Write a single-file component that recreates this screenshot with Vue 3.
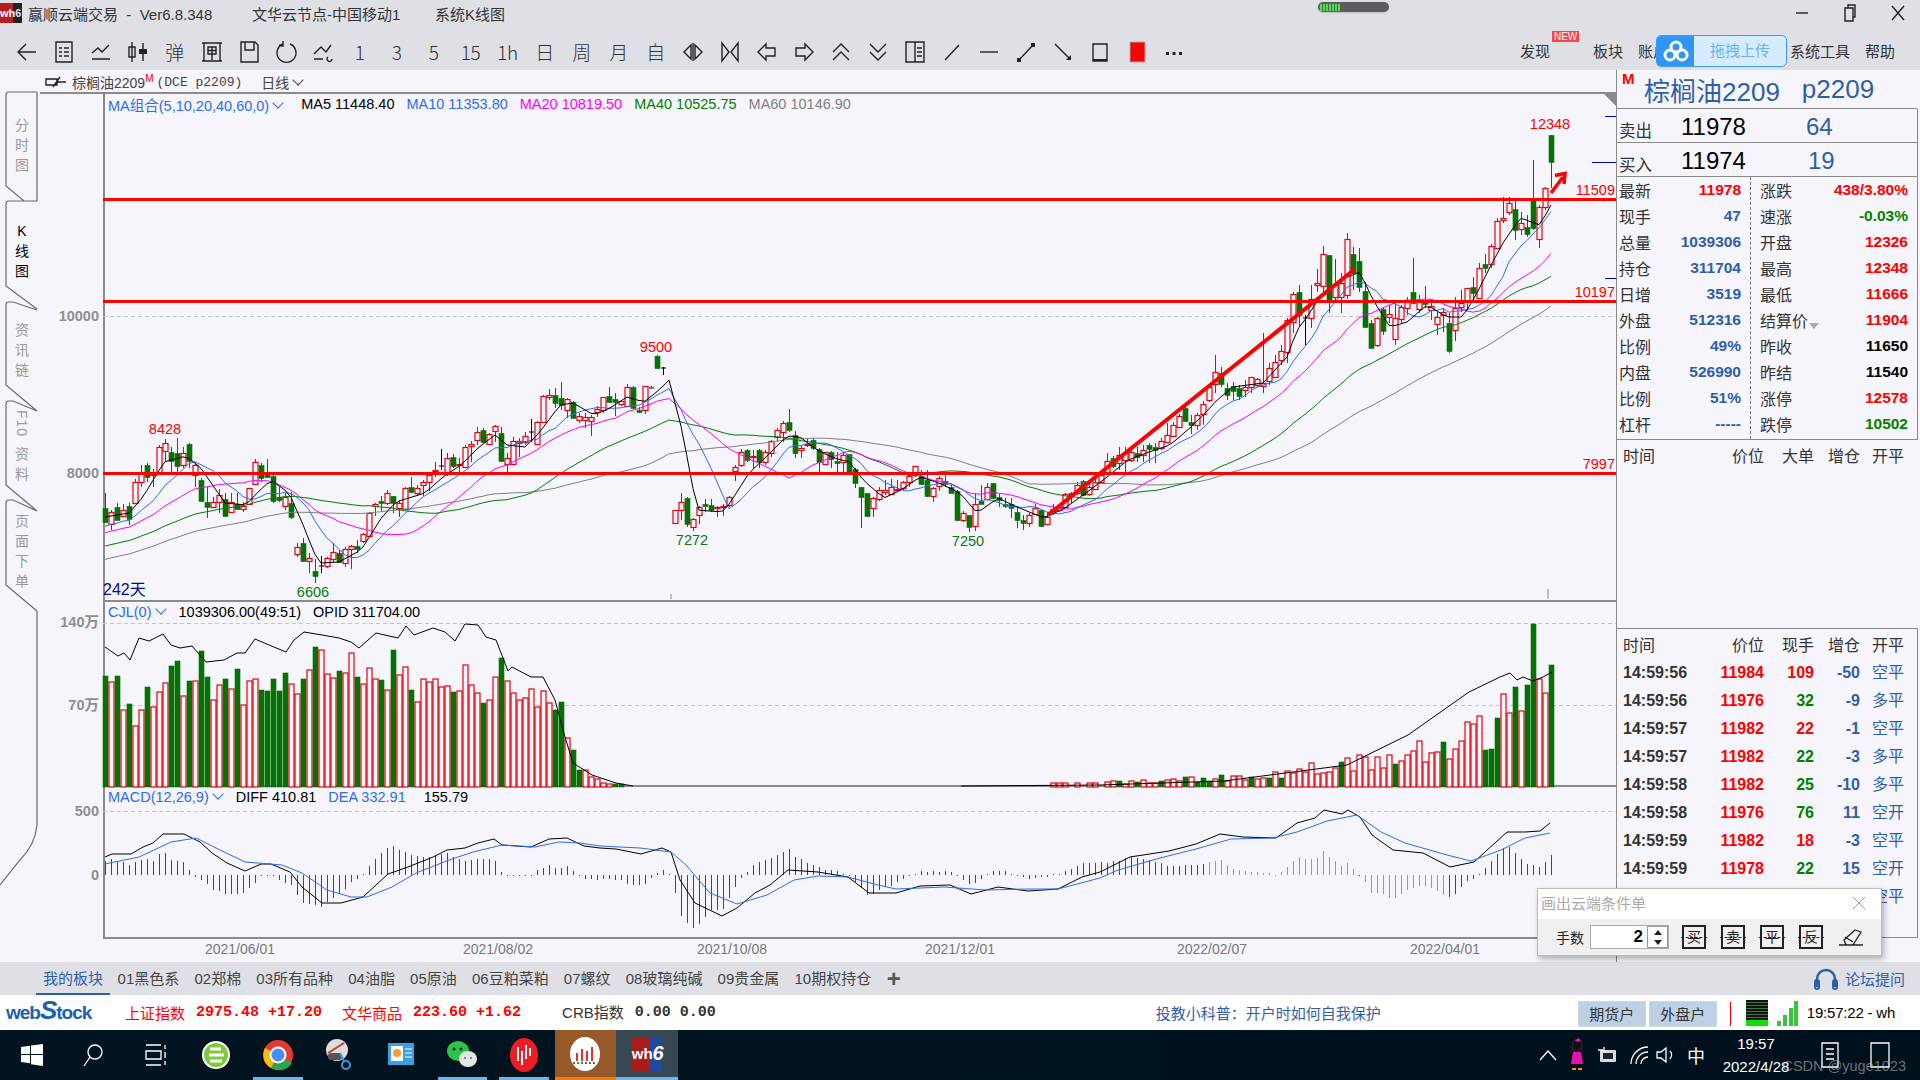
<template>
  <div class="app">
    <!-- title bar -->
    <header class="titlebar">
      <div class="app-logo"><span class="wh">wh</span><span class="six">6</span></div>
      <span class="t-name">赢顺云端交易&nbsp; - &nbsp;Ver6.8.348</span>
      <span class="t-node">文华云节点-中国移动1</span>
      <span class="t-view">系统K线图</span>
      <div class="net-pill">
        <i v-for="n in 7" :key="n"></i>
      </div>
      <div class="win-btns">
        <svg width="14" height="14" viewBox="0 0 14 14"><path d="M1 7h12" class="ln" /></svg>
        <svg width="14" height="18" viewBox="0 0 14 18"><path d="M2 4h8v13H2zM5 4V1h7v12h-2" class="ln" /></svg>
        <svg width="14" height="16" viewBox="0 0 14 16"><path d="M1 1l12 14M13 1L1 15" class="ln" /></svg>
      </div>
    </header>

    <!-- toolbar -->
    <nav class="toolbar">
      <div v-for="(t, i) in tools" :key="i" class="tool">
        <span v-if="t.text" class="tool-text">{{ t.text }}</span>
        <svg v-else width="24" height="24" viewBox="0 0 24 24">
          <path :d="t.d" class="ln" />
          <path v-if="t.fill" :d="t.fill" class="fl" />
          <path v-if="t.red" :d="t.red" class="fr" />
        </svg>
      </div>
      <div class="tool-right">
        <span class="find">发现<em class="new">NEW</em></span>
        <span class="block">板块</span>
        <span class="acct">账户</span>
        <span class="sys">系统工具</span>
        <span class="help">帮助</span>
      </div>
      <div class="upload">
        <div class="up-ico">
          <svg width="28" height="22" viewBox="0 0 28 22"><circle cx="14" cy="7" r="5" /><circle cx="8" cy="15" r="5" /><circle cx="20" cy="15" r="5" /></svg>
        </div>
        <div class="up-txt">拖拽上传</div>
      </div>
    </nav>

    <!-- workspace -->
    <main class="workspace">
      <section class="left">
        <div class="symbol">
          <svg class="sym-ico" width="22" height="14" viewBox="0 0 22 14"><path d="M1 4h11v6H1zM12 7h9M8 12L15 2" class="ln" /></svg>
          <span>棕榈油2209<sup>M</sup></span>
          <span class="dce">(DCE p2209)</span>
          <span class="period">日线<i class="chev"></i></span>
        </div>
        <div class="body">
          <aside class="tabs">
            <svg class="tab-lines" width="103" height="868" viewBox="0 94 103 868">
              <path :d="tabPath" />
            </svg>
            <div v-for="(t, i) in sideTabs" :key="i" class="tab" :class="['tab-' + i, { on: i === 1 }]">
              <span v-for="g in t" :key="g" :class="{ rot: g === 'F10' }">{{ g }}</span>
            </div>
          </aside>
          <div class="charts">
            <div class="pane pane-price">
              <div class="legend">
                <span class="b first">MA组合(5,10,20,40,60,0)<i class="chev"></i></span>
                <span class="k">MA5 11448.40</span>
                <span class="b">MA10 11353.80</span>
                <span class="m">MA20 10819.50</span>
                <span class="g">MA40 10525.75</span>
                <span class="y">MA60 10146.90</span>
              </div>
            </div>
            <div class="pane pane-vol">
              <div class="legend">
                <span class="b">CJL(0)<i class="chev"></i></span>
                <span class="k">1039306.00(49:51)</span>
                <span class="k">OPID 311704.00</span>
              </div>
            </div>
            <div class="pane pane-macd">
              <div class="legend">
                <span class="b">MACD(12,26,9)<i class="chev"></i></span>
                <span class="k">DIFF 410.81</span>
                <span class="b">DEA 332.91</span>
                <span class="k kk">155.79</span>
              </div>
            </div>
            <div class="dates">
              <span v-for="d in dates" :key="d">{{ d }}</span>
            </div>

            <svg class="canvas" width="1513" height="868" viewBox="103 94 1513 868">
              <!-- grid -->
              <path d="M103 316.500H1616M103 623.500H1616M103 705.500H1616M103 811.500H1616" class="dash" />
              <path d="M1605 116.500H1616M1592 162.500H1616M1605 278.500H1616" class="tick" />
              <path d="M671 594v5M1548 589v10" class="tickg" />
              <polygon points="1604,94 1616,94 1616,106" class="corner" />

              <text v-for="l in axis" :key="l.t" :x="99" :y="l.y + 5" class="ax">{{ l.t }}</text>

              <!-- candles -->
              <g v-for="c in candles" :key="c.x" :class="c.cls">
                <path :d="`M${c.x + 0.5} ${c.h}V${c.l}`" class="wick" />
                <rect :x="c.x - 2" :y="c.top + 0.5" width="5" :height="c.bh" class="bodyr" />
              </g>

              <polyline :points="ma60" class="l ma60" />
              <polyline :points="ma40" class="l ma40" />
              <polyline :points="ma20" class="l ma20" />
              <polyline :points="ma10" class="l ma10" />
              <polyline :points="ma5" class="l ma5" />

              <path d="M103 199.500H1616M103 301.500H1616M103 473.500H1616" class="hline" />
              <path d="M1048 515L1355 269" class="hline diag" />
              <path d="M1551 193L1563 177M1555 175.500L1565 173.500L1564 184" class="arrow" />

              <text x="1550" y="129" class="lab r mid">12348</text>
              <text x="1615" y="195" class="lab r end">11509</text>
              <text x="1615" y="297" class="lab r end">10197</text>
              <text x="1615" y="469" class="lab r end">7997</text>
              <text x="165" y="434" class="lab r mid">8428</text>
              <text x="656" y="352" class="lab r mid">9500</text>
              <text x="692" y="545" class="lab gn mid">7272</text>
              <text x="968" y="546" class="lab gn mid">7250</text>
              <text x="313" y="597" class="lab gn mid">6606</text>
              <text x="103" y="595" class="days">242天</text>

              <!-- volume -->
              <g v-for="v in vols" :key="'v' + v.x" :class="v.up ? 'up' : 'dn'">
                <rect :x="v.x - 2" :y="v.y" width="5" :height="787 - v.y" class="bodyr" />
              </g>
              <polyline :points="opidA" class="l ma5" />
              <polyline :points="opidB" class="l ma5" />

              <!-- macd -->
              <path :d="histRed" class="hist red" />
              <path :d="histGreen" class="hist green" />
              <path :d="histGray" class="hist gray" />
              <polyline :points="diffLine" class="l ma5" />
              <polyline :points="deaLine" class="l ma10" />
            </svg>
          </div>
        </div>
      </section>

      <!-- right quote panel -->
      <aside class="panel">
        <div class="p-title"><b class="mk">M</b><span class="p-name">棕榈油2209</span><span class="p-code">p2209</span></div>
        <div class="p-book"><span class="lb">卖出</span><span class="px">11978</span><span class="qt">64</span></div>
        <div class="p-book"><span class="lb">买入</span><span class="px">11974</span><span class="qt q2">19</span></div>
        <div class="p-grid">
          <div class="q-col q-left">
            <div v-for="r in quoteL" :key="r[0] + r[1]" class="q-row"><span>{{ r[0] }}</span><b :class="r[2]">{{ r[1] }}</b></div>
          </div>
          <div class="q-col q-right">
            <div v-for="r in quoteR" :key="r[0]" class="q-row"><span>{{ r[0] }}<i v-if="r[0] === '结算价'" class="tri"></i></span><b :class="r[2]">{{ r[1] }}</b></div>
          </div>
        </div>
        <div class="t-head big-head"><span>时间</span><span>价位</span><span>大单</span><span>增仓</span><span>开平</span></div>
        <div class="ticks">
          <div class="t-head"><span>时间</span><span>价位</span><span>现手</span><span>增仓</span><span>开平</span></div>
          <div v-for="(t, i) in trades" :key="i" class="t-row">
            <b class="tm">{{ t[0] }}</b><b class="r">{{ t[1] }}</b><b :class="t[2] === 'r' ? 'r' : 'gn'">{{ t[3] }}</b><b class="bl">{{ t[4] }}</b><span class="bl">{{ t[5] }}</span>
          </div>
        </div>
      </aside>
    </main>

    <!-- bottom tabs -->
    <div class="sectors">
      <span v-for="(s, i) in sectors" :key="s" class="sec" :class="{ on: i === 0 }">{{ s }}</span>
      <span class="plus">+</span>
      <span class="forum">
        <svg width="26" height="24" viewBox="0 0 26 24"><path d="M4 20V12a9 9 0 0 1 18 0v8" class="hs" /><rect x="2" y="13" width="4" height="9" rx="2" class="hsf" /><rect x="20" y="13" width="4" height="9" rx="2" class="hsf" /></svg>
        论坛提问
      </span>
    </div>

    <!-- status bar -->
    <div class="status">
      <span class="web">web<em>S</em>tock</span>
      <span class="r idx idx1">上证指数</span><b class="r num n1">2975.48 +17.20</b>
      <span class="r idx idx2">文华商品</span><b class="r num n1">223.60 +1.62</b>
      <span class="crb">CRB指数</span><b class="num n2">0.00 0.00</b>
      <span class="edu">投教小科普：开户时如何自我保护</span>
      <span class="acc acc1">期货户</span><span class="acc">外盘户</span>
      <i class="red-tick"></i>
      <span class="meter"></span>
      <svg class="signal" width="22" height="28" viewBox="0 0 22 28"><path d="M1 22h4v5H1zM7 16h4v11H7zM13 9h4v18h-4zM18 2h4v25h-4z" /></svg>
      <span class="clock">19:57:22 - wh</span>
    </div>

    <!-- windows taskbar -->
    <footer class="taskbar">
      <div class="tb-left">
        <div class="tb"><svg width="22" height="22" viewBox="0 0 22 22"><path d="M0 3l9-1.300V10H0zM10 1.500L22 0v10H10zM0 11h9v8.300L0 18zM10 11h12v11l-12-1.700z" fill="#fff" /></svg></div>
        <div class="tb"><svg width="22" height="24" viewBox="0 0 22 24"><circle cx="13" cy="9" r="7" class="tb-ln" /><path d="M8 14L2 23" class="tb-ln" /></svg></div>
        <div class="tb"><svg width="24" height="24" viewBox="0 0 24 24"><path d="M3 2h15M3 22h15M3 8h15v8H3zM22 2v4M22 9v6M22 18v4" class="tb-ln" /></svg></div>
        <div class="tb"><svg width="32" height="34" viewBox="0 0 32 34"><circle cx="16" cy="17" r="13" fill="#7ecb3a" stroke="#fff" stroke-width="2" /><path d="M9 17h15M10 11h11M10 23h12" stroke="#fff" stroke-width="3" /></svg></div>
        <div class="tb run"><svg width="32" height="32" viewBox="0 0 32 32"><circle cx="16" cy="16" r="15" fill="#e33b2e" /><path d="M16 16L30 24A15 15 0 0 1 9 29z" fill="#2ea44f" /><path d="M16 16L9 29A15 15 0 0 1 3 9z" fill="#fbbc05" /><circle cx="16" cy="16" r="7.500" fill="#4a8af4" stroke="#fff" stroke-width="2" /></svg></div>
        <div class="tb"><svg width="34" height="36" viewBox="0 0 34 36"><circle cx="15" cy="13" r="11" fill="#ddd" /><path d="M6 16L22 6" stroke="#c33" stroke-width="2" /><rect x="6" y="16" width="14" height="7" rx="3" fill="#555" /><circle cx="24" cy="28" r="4" fill="none" stroke="#3a9ad9" stroke-width="2" /><path d="M22 24L18 16" stroke="#3a9ad9" stroke-width="2" /></svg></div>
        <div class="tb"><svg width="30" height="30" viewBox="0 0 30 30"><rect x="2" y="3" width="26" height="22" fill="#3aa0e0" /><rect x="5" y="6" width="12" height="15" fill="#fff" /><circle cx="11" cy="13" r="4" fill="#f0a030" /><path d="M19 9h7M19 13h7M19 17h7" stroke="#fff" /></svg></div>
        <div class="tb run"><svg width="34" height="32" viewBox="0 0 34 32"><ellipse cx="13" cy="12" rx="11" ry="10" fill="#2fc24a" /><ellipse cx="23" cy="20" rx="9" ry="8" fill="#e6e6e6" /><circle cx="9" cy="10" r="1.500" fill="#123" /><circle cx="16" cy="10" r="1.500" fill="#123" /><circle cx="20" cy="19" r="1" fill="#666" /><circle cx="26" cy="19" r="1" fill="#666" /></svg></div>
        <div class="tb run"><svg width="32" height="36" viewBox="0 0 32 36"><ellipse cx="16" cy="18" rx="14" ry="17" fill="#ee1c25" /><path d="M10 10v14M14 14v14M18 8v14M22 11v8" stroke="#fff" stroke-width="2" /></svg></div>
        <div class="tb tile-or"><svg width="32" height="36" viewBox="0 0 32 36"><ellipse cx="16" cy="18" rx="15" ry="17" fill="#fff" /><path d="M8 17v8M13 13v12M18 15v10M23 11v14" stroke="#d33" stroke-width="2" /><path d="M4 27h24" stroke="#2a8a3a" stroke-dasharray="2 2" stroke-width="2" /></svg></div>
        <div class="tb tile-bl"><div class="wh6"><span>wh</span><span class="six">6</span></div></div>
      </div>
      <div class="tray">
        <svg width="18" height="12" viewBox="0 0 18 12"><path d="M1 11L9 2l8 9" class="tb-ln" /></svg>
        <svg width="16" height="34" viewBox="0 0 16 34"><ellipse cx="8" cy="8" rx="5" ry="6" fill="#111" stroke="#555" stroke-width=".5"/><path d="M4 14h8l2 12H2z" fill="#e912a6" /><path d="M3 31h4M9 31h4" stroke="#f90" stroke-width="2" /><path d="M6 2l4-2 2 3-4 1z" fill="#e912a6" /></svg>
        <svg width="20" height="20" viewBox="0 0 20 20"><rect x="3" y="5" width="16" height="12" rx="1" fill="#ddd" /><path d="M7 2v5M1 5h5" class="tb-ln" /><path d="M6 8h10v6H6z" fill="#223" /></svg>
        <svg width="20" height="20" viewBox="0 0 20 20"><path d="M2 19A17 17 0 0 1 19 2M7 19A12 12 0 0 1 19 7M12 19A7 7 0 0 1 19 12" class="tb-ln" /></svg>
        <svg class="vol-ico" width="22" height="22" viewBox="0 0 22 22"><path d="M2 8h4l5-4v14l-5-4H2zM15 7a6 6 0 0 1 0 8" class="tb-ln" /></svg>
        <span class="ime">中</span>
        <div class="tb-time"><span>19:57</span><span>2022/4/28</span></div>
        <svg class="note" width="22" height="28" viewBox="0 0 22 28"><path d="M3 2h16v24H3zM7 8h8M7 13h8M7 18h8" class="tb-ln" /></svg>
        <svg class="desk" width="22" height="26" viewBox="0 0 22 26"><path d="M2 1h18v24H2z" class="tb-ln" /></svg>
      </div>
      <span class="mark">CSDN @yuge1023</span>
    </footer>

    <!-- floating order window -->
    <div class="popup">
      <div class="pop-title">
        <span>画出云端条件单</span>
        <svg width="14" height="14" viewBox="0 0 14 14"><path d="M1 1l12 12M13 1L1 13" /></svg>
      </div>
      <div class="pop-body">
        <span class="lots">手数</span>
        <div class="lot-box">
          <b>2</b>
          <div class="spin"><i class="sp-up"></i><i class="sp-dn"></i></div>
        </div>
        <div v-for="b in ['买', '卖', '平', '反']" :key="b" class="op"><span>{{ b }}</span></div>
        <svg class="eraser" width="26" height="22" viewBox="0 0 26 22"><path d="M1 19h24M8 19l-2-5L17 4l6 2-8 13M7 11l8 5" /></svg>
      </div>
    </div>
  </div>
</template>

<script setup>
const tools = [
  { d: 'M21 12H4M11 4l-8 8 8 8' },
  { d: 'M4 2h16v20H4zM7 8h3M12 8h5M7 12h3M12 12h5M7 16h3M12 16h5' },
  { d: 'M3 13l6-5 4 4 7-7M3 19h18' },
  { d: 'M6 2v20M3 7h6v10H3zM17 3v18', fill: 'M13 9h8v5h-8z' },
  { text: '弹' },
  { d: 'M4 3h16v18H4zM2 3h20M2 21h20M8 7h8v7H8zM8 10.500h8M12 7v13' },
  { d: 'M4 2h14l3 3v17H4zM8 2v8h9V2M8 22' },
  { d: 'M9 4a9.500 9.500 0 1 0 7 0M9 1v5l-4-1' },
  { d: 'M3 19h9M3 14l7-7 5 5 5-7M17 17a2.500 2.500 0 1 0 4 2' },
  { text: '1' }, { text: '3' }, { text: '5' }, { text: '15' }, { text: '1h' },
  { text: '日' }, { text: '周' }, { text: '月' }, { text: '自' },
  { d: 'M3 12l7-7v14zM21 12l-7-7v14zM12 3v18' },
  { d: 'M4 3v18l7-9zM20 3v18l-7-9z' },
  { d: 'M3 12l8-8v4h9v8h-9v4z' },
  { d: 'M21 12l-8-8v4H4v8h9v4z' },
  { d: 'M4 12l8-8 8 8M4 20l8-8 8 8' },
  { d: 'M4 4l8 8 8-8M4 12l8 8 8-8' },
  { d: 'M3 2h18v20H3zM12 2v20M14 8h5M14 12h5M14 16h5' },
  { d: 'M5 20L19 5' },
  { d: 'M3 12h18' },
  { d: 'M5 20L19 5', fill: 'M3 18h4v4H3zM17 3h4v4h-4z' },
  { d: 'M4 4l15 15', fill: 'M15 20h5v-5z' },
  { d: 'M5 4h14v17H5z', fill: 'M5 19h14v2H5z' },
  { d: '', red: 'M5 2h15v20H5z' },
  { d: '', fill: 'M4 12h3v3H4zM10.500 12h3v3h-3zM17 12h3v3h-3z' },
]

const sideTabs = [['分', '时', '图'], ['K', '线', '图'], ['资', '讯', '链'], ['F10', '资', '料'], ['页', '面', '下', '单']]
const tabPath =
  'M37 92H9Q6 92 6 95V186L24 201H37V92' +
  'M24 201H9Q6 201 6 204V286L37 309' +
  'M37 310L13 302H9Q6 302 6 305V385L37 411' +
  'M37 411L13 401H9Q6 401 6 404V485L37 511' +
  'M37 511L13 500H9Q6 500 6 503V585L37 611' +
  'M37 611V825Q35 845 20 860L0 885'

const dates = ['2021/06/01', '2021/08/02', '2021/10/08', '2021/12/01', '2022/02/07', '2022/04/01']
const axis = [
  { t: '10000', y: 316 }, { t: '8000', y: 473 }, { t: '140万', y: 622 },
  { t: '70万', y: 705 }, { t: '500', y: 811 }, { t: '0', y: 875 },
]

// --- chart data, all in screen pixels ---
let seed = 20220428
const rnd = () => {
  seed = (seed * 1664525 + 1013904223) % 4294967296
  return seed / 4294967296
}
const interp = (pts, x) => {
  if (x <= pts[0][0]) return pts[0][1]
  for (let i = 1; i < pts.length; i++) {
    if (x <= pts[i][0]) {
      const [x0, y0] = pts[i - 1]
      const [x1, y1] = pts[i]
      return y0 + ((y1 - y0) * (x - x0)) / (x1 - x0)
    }
  }
  return pts[pts.length - 1][1]
}
const N = 242
const xOf = (i) => 105 + 6 * i
const toPts = (arr) => arr.map((y, i) => `${xOf(i)},${y.toFixed(1)}`).join(' ')

// candles read off the chart: colour top bottom high low
const barsA = 'g535,578,490,580 r545,582,540,600 g532,570,518,570 r540,558,523,560 g528,568,520,585 r455,518,448,520 r425,455,405,470 g405,440,400,455 r430,436,418,470 r350,430,345,435 r340,365,328,392 g365,393,350,425 g370,410,325,425 r368,405,350,415 g343,395,340,415 r405,435,395,470 g450,513,445,515 g516,530,470,565 r516,532,500,533 r496,518,478,550 g508,558,490,560 r517,548,488,550 g523,537,488,540 r527,536,517,545 r475,522,475,525 r397,463,388,465 g405,443,400,455 g425,440,388,445 g438,513,435,518 g502,510,470,515 r502,528,490,540 g520,563,485,568 r652,674,640,680 g640,693,625,697 r683,692,668,728 g723,737,688,758 k705,706,678,728 r683,708,680,715 r667,687,640,695 g670,698,660,700 r658,700,650,710 r647,655,645,717 g647,655,630,670 r612,634,610,640 r550,618,545,620 r521,528,518,558 g514,520,498,542 r490,520,480,525 g498,520,498,550 r520,535,510,560 r473,535,470,537 g472,486,442,490 r475,490,465,497 r455,465,450,497 r435,455,425,482 r420,423,395,440 k405,406,358,420 r383,425,370,438 g382,410,372,415 r403,405,385,430 r352,412,345,415 r343,350,333,395 r305,328,290,345 g300,335,295,340 r313,342,310,345 r288,302,285,335 g310,395,292,397 r385,402,368,425 r333,403,322,405 r333,340,325,380 r317,335,305,345 k303,304,268,335 r275,340,273,345 r197,275,195,280 r195,200,178,210 g195,218,175,235'
const barsB = 'g205,225,155,240 r208,242,205,265 g215,262,212,265 r259,272,250,280 r262,272,250,295 r262,275,255,318 r237,245,228,260 r202,240,200,250 g197,214,170,218 g207,215,190,258 r212,220,210,228 r172,228,162,232 g170,234,168,238 g240,246,230,250 r168,240,168,252 k170,171,168,172 g78,115,76,116 k112,113,112,135 - r541,580,540,583 r517,542,490,570 g504,582,502,592 r568,592,565,602 r530,555,527,582 g522,527,506,545 g525,540,506,545 r530,533,528,560 r529,533,523,558 r500,525,498,530 r412,425,405,452 r367,407,358,410 g360,390,357,395 r377,381,360,415 g360,397,358,415 r365,395,360,405 r332,368,330,380 r300,320,295,335 r280,308,272,335 g275,300,237,305 g315,368,303,385 r355,362,345,385 r341,345,325,350 g330,355,325,360 g358,398,355,425 r365,400,365,403 g365,385,362,415 g393,400,365,425 r375,395,370,425 g372,425,372,428 g418,460,415,475 g470,500,470,595 g490,558,488,562 r505,535,500,560 r480,508,470,512 r480,485,450,495 r472,492,448,495 r478,480,450,485 r456,475,452,480 r437,455,425,470 r408,435,408,440 g438,462,420,465 g450,497,420,500 r475,500,470,515 r445,468,438,482 g452,460,425,470 g470,487,465,490 g483,570,480,573 r548,570,542,575 g555,590,555,605 r523,590,490,603 g512,520,465,520 r470,507,460,510 g460,505,458,507 g500,510,492,530 g523,528,505,535 g522,535,505,565 g545,570,530,595 g570,580,555,600 r555,580,550,590 r533,550,522,555 g540,588,540,590 r560,580,545,585 r538,545,522,555 r530,540,525,545 r492,530,488,535 g488,497,485,520 r465,490,455,495 g453,495,450,497 r470,490,460,497 r455,475,448,480 r435,455,420,460 r393,425,370,430 g385,408,378,415 r375,400,350,420 r370,392,350,430 r365,390,355,395 g368,380,350,395 r360,375,345,395 g346,358,340,398 g350,360,340,400 r333,355,325,360 r316,338,280,340 r285,318,275,320 r258,290,253,295 g235,275,232,275 g275,285,255,312 r255,285,250,300 r222,252,212,285 r172,212,165,215'
const barsC = 'r815,850,765,880 g818,850,800,860 g865,885,850,900 g857,872,845,900 g865,890,855,900 r860,870,840,890 r832,862,830,880 r838,857,835,860 r850,860,700,880 r805,845,790,855 r785,830,765,832 r752,778,735,795 r660,757,655,790 r583,668,575,700 g577,645,555,680 k650,651,645,735 r597,655,555,685 r550,555,507,575 r463,560,438,575 g465,600,465,640 r555,590,478,600 r548,590,520,640 r418,587,400,597 g462,520,440,570 g483,560,445,575 g573,682,545,685 g670,745,660,745 r655,735,650,740 g628,695,620,705 r643,652,615,670 r655,718,610,735 r622,657,615,670 r607,625,590,645 g576,610,475,612 r600,628,585,640 g600,613,558,625 r617,628,600,660 r650,672,635,705 r636,645,625,695 g670,755,640,760 r625,690,590,722 r610,622,570,635 r565,605,565,630 g562,580,530,600 r503,592,490,595 g492,505,462,520 r437,490,432,505 r362,442,355,445 r355,360,292,370 r310,338,292,345 g328,390,300,420 r370,388,335,405 g381,401,345,412 g300,385,180,390 r322,418,315,443 r265,322,262,330 g105,187,105,265'

const parseBars = (s, off, div) => s.split(' ').map((b) => {
  if (b === '-') return null
  const [t, e, h, l] = b.slice(1).split(',').map((n) => off + Number(n) / div)
  return { kind: b[0], t, e, h, l }
})
const bars = [...parseBars(barsA, 330, 3), ...parseBars(barsB, 330, 3), ...parseBars(barsC, 100, 3)]

const closes = []
bars.forEach((b, i) => {
  if (!b) closes.push(closes[i - 1])
  else closes.push(b.kind === 'r' ? b.t : b.e)
})

const candles = []
bars.forEach((b, i) => {
  if (!b) return
  const cls = b.kind === 'r' ? 'up' : b.kind === 'g' ? 'dn' : 'doji'
  candles.push({
    x: xOf(i),
    cls,
    top: Math.round(b.t),
    bh: Math.max(1, Math.round(b.e - b.t)),
    h: Math.round(b.h),
    l: Math.round(b.l),
  })
})

const ma5Pts = [[105,517],[129,513],[143,497],[164,462],[186,456],[200,467],[214,487],[225,503],[246,505],[257,493],[271,480],[289,493],[304,527],[314,553],[321,563],[339,562],[361,550],[382,517],[396,502],[425,493],[443,477],[461,465],[479,447],[495,435],[507,445],[525,447],[539,433],[560,405],[573,403],[594,415],[610,408],[627,397],[644,402],[659,390],[669,380],[682,430],[697,510],[722,512],[730,503],[749,473],[766,457],[787,436],[800,437],[817,450],[834,458],[850,462],[863,480],[884,498],[901,490],[920,477],[939,483],[960,493],[977,513],[998,498],[1017,507],[1044,518],[1065,508],[1090,490],[1107,477],[1128,460],[1149,452],[1170,445],[1191,427],[1208,410],[1217,400],[1233,387],[1263,383],[1287,357],[1297,330],[1307,317],[1320,297],[1340,280],[1360,272],[1373,300],[1390,327],[1407,322],[1427,305],[1447,317],[1463,317],[1477,293],[1490,267],[1503,243],[1520,218],[1540,225],[1551,205]]
const ma5Arr = Array.from({ length: N }, (_, i) => interp(ma5Pts, xOf(i)))

const history = Array.from({ length: 60 }, (_, i) => 600 - (i / 60) * 80)
const maOf = (n) => closes.map((_, i) => {
  let s = 0
  for (let k = i - n + 1; k <= i; k++) s += k < 0 ? history[60 + k] : closes[k]
  return s / n
})
const ma5 = toPts(ma5Arr)
const ma10 = toPts(maOf(10))
const ma20 = toPts(maOf(20))
const ma40 = toPts(maOf(40))
const ma60 = toPts(maOf(60))

// first stretch of volume: colour + top (y offset x3 from 600)
const volHead = 'g228 r246 g228 r330 g312 r378 r330 g261 r321 r276 r250 g198 g183 r288 g243 r243 g153 g231 r300 r255 g237 r267 g207 r315 r243 r237 g270 g273 g237 g273 g219 r252 r282 g237 r210 g141 r150 r222 r234 g213 r219 r159 g231 r252 r204 r237 g240 r270 g150 r225 r201 g270 r306 r237 r246 r237 r261 r258 g276 r273 r195 r255 r279 g309 r300 r231 g174 r243 r279 r300 r294 r267 r321 r273 r309 g330 g306 r414 g450 g510 r510 r532 r538 r549 r552 g552 g552'.split(' ')
const volTail = { 233: ['r', 694], 234: ['r', 713], 235: ['g', 687], 236: ['r', 711], 237: ['g', 685], 238: ['g', 624], 239: ['r', 679], 240: ['r', 693], 241: ['g', 665] }
const vols = []
volHead.forEach((s, i) => {
  vols.push({ x: xOf(i), up: s[0] === 'r', y: Math.round(600 + Number(s.slice(1)) / 3) })
})
for (let i = 143; i < N; i++) {
  if (volTail[i]) {
    vols.push({ x: xOf(i), up: volTail[i][0] === 'r', y: volTail[i][1] })
  } else {
    const h = 1.5 * Math.exp((i - 143) * 0.042) * (0.6 + rnd() * 0.8)
    const up = rnd() < 0.78
    if (h >= 3) vols.push({ x: xOf(i), up, y: Math.round(787 - h) })
  }
}

const joinPts = (p) => p.map((q) => q.join(',')).join(' ')
const opidA = joinPts([[105,647],[118,656],[124,653],[130,660],[139,638],[149,641],[163,634],[171,645],[180,648],[192,646],[206,662],[224,660],[237,653],[245,653],[255,639],[269,645],[286,652],[294,640],[304,632],[322,635],[339,638],[351,642],[359,648],[376,633],[398,638],[406,626],[414,635],[433,628],[445,632],[455,641],[465,624],[478,625],[486,637],[496,640],[508,671],[512,667],[531,677],[543,677],[555,700],[565,737],[573,763],[592,775],[616,783],[633,786]])
const opidB = joinPts([[961,786],[1100,785],[1224,781],[1347,765],[1408,735],[1469,692],[1500,677],[1510,673],[1517,680],[1523,677],[1533,681],[1543,677],[1552,672]])

const diffPts = [[105,857],[112,854],[131,854],[143,847],[153,843],[163,834],[184,834],[200,842],[212,853],[227,863],[245,871],[261,864],[271,864],[290,872],[302,887],[322,903],[341,903],[363,897],[388,874],[408,867],[433,857],[447,850],[465,848],[478,843],[494,839],[502,845],[531,847],[549,839],[567,838],[584,846],[600,848],[616,849],[641,854],[662,848],[671,852],[680,880],[695,903],[722,916],[737,908],[755,893],[770,885],[788,870],[818,872],[848,877],[869,893],[896,893],[920,886],[950,885],[971,894],[998,887],[1028,891],[1058,889],[1082,877],[1100,872],[1130,857],[1169,851],[1196,844],[1220,834],[1243,837],[1276,838],[1297,823],[1315,818],[1324,810],[1342,814],[1348,810],[1360,817],[1372,835],[1393,850],[1423,853],[1450,867],[1474,862],[1507,832],[1525,832],[1540,831],[1550,823]]
const deaPts = [[105,864],[139,857],[171,842],[196,838],[216,848],[245,862],[282,865],[302,873],[327,890],[351,897],[367,897],[392,887],[416,873],[449,860],[473,852],[502,845],[535,847],[559,842],[580,843],[600,846],[640,848],[671,852],[686,865],[710,893],[737,904],[767,895],[794,880],[818,876],[848,877],[878,885],[896,889],[944,887],[986,890],[1028,889],[1058,889],[1100,878],[1118,870],[1160,858],[1196,849],[1231,839],[1273,838],[1297,832],[1327,821],[1357,815],[1381,832],[1405,843],[1447,855],[1471,861],[1501,850],[1525,838],[1550,833]]
const diffLine = joinPts(diffPts)
const deaLine = joinPts(deaPts)

let histRed = ''
let histGreen = ''
let histGray = ''
for (let i = 0; i < N; i++) {
  const x = xOf(i)
  const v = 2 * (interp(deaPts, x) - interp(diffPts, x)) + (rnd() - 0.5) * 2
  const h = Math.abs(v) < 1 ? (v < 0 ? -1 : 1) : v
  const seg = `M${x + 0.5} 875V${(875 - h).toFixed(0)}`
  if ((x >= 1209 && x <= 1355) || (x >= 1363 && x <= 1447)) histGray += seg
  else if (h > 0) histRed += seg
  else histGreen += seg
}

const quoteL = [
  ['最新', '11978', 'r'], ['现手', '47', 'bl'], ['总量', '1039306', 'bl'], ['持仓', '311704', 'bl'], ['日增', '3519', 'bl'],
  ['外盘', '512316', 'bl'], ['比例', '49%', 'bl'], ['内盘', '526990', 'bl'], ['比例', '51%', 'bl'], ['杠杆', '-----', 'bl'],
]
const quoteR = [
  ['涨跌', '438/3.80%', 'r'], ['速涨', '-0.03%', 'gn'], ['开盘', '12326', 'r'], ['最高', '12348', 'r'], ['最低', '11666', 'r'],
  ['结算价', '11904', 'r'], ['昨收', '11650', 'kk'], ['昨结', '11540', 'kk'], ['涨停', '12578', 'r'], ['跌停', '10502', 'gn'],
]
const trades = [
  ['14:59:56', '11984', 'r', '109', '-50', '空平'],
  ['14:59:56', '11976', 'g', '32', '-9', '多平'],
  ['14:59:57', '11982', 'r', '22', '-1', '空平'],
  ['14:59:57', '11982', 'g', '22', '-3', '多平'],
  ['14:59:58', '11982', 'g', '25', '-10', '多平'],
  ['14:59:58', '11976', 'g', '76', '11', '空开'],
  ['14:59:59', '11982', 'r', '18', '-3', '空平'],
  ['14:59:59', '11978', 'g', '22', '15', '空开'],
  ['', '', 'g', '', '', '空平'],
]
const sectors = ['我的板块', '01黑色系', '02郑棉', '03所有品种', '04油脂', '05原油', '06豆粕菜粕', '07螺纹', '08玻璃纯碱', '09贵金属', '10期权持仓']
</script>

<style>
html, body { margin: 0; padding: 0; background: #f5f5fb; }
</style>

<style scoped>
.app {
  position: relative;
  width: 1920px;
  height: 1080px;
  overflow: hidden;
  display: flex;
  flex-direction: column;
  background: #f5f5fb;
  color: #333;
  font-family: "Liberation Sans", "Noto Sans CJK SC", sans-serif;
  font-size: 15px;
}
svg { display: block; }
.ln { fill: none; stroke: #222; stroke-width: 1.4; }
.fl { fill: #222; stroke: none; }
.fr { fill: #f00; stroke: #aaa; stroke-width: 1; }
.chev {
  display: inline-block;
  width: 7px;
  height: 7px;
  margin: 0 2px 4px 5px;
  border-right: 1.5px solid currentColor;
  border-bottom: 1.5px solid currentColor;
  transform: rotate(45deg);
}

/* title */
.titlebar {
  position: relative;
  height: 35px;
  flex: none;
  box-sizing: border-box;
  padding-bottom: 9px;
  display: flex;
  align-items: center;
  background: #dfe0e5;
}
.app-logo {
  width: 22px;
  height: 20px;
  background: linear-gradient(90deg, #b81c1c 60%, #222 60%);
  color: #fff;
  font-size: 11px;
  font-weight: bold;
  display: flex;
  align-items: center;
  overflow: hidden;
}
.app-logo .six { color: #cfe0ff; }
.t-name { margin-left: 6px; width: 224px; white-space: nowrap; }
.t-node { width: 183px; white-space: nowrap; }
.net-pill {
  position: absolute;
  left: 1318px;
  top: 2px;
  width: 71px;
  height: 10px;
  padding-left: 2px;
  box-sizing: border-box;
  border-radius: 5px;
  background: #5c5c5e;
  display: flex;
  align-items: center;
  gap: 1px;
  box-shadow: 0 1px 2px #bbb;
}
.net-pill i { width: 2px; height: 7px; background: #4ee04e; }
.win-btns {
  margin-left: auto;
  padding-right: 15px;
  display: flex;
  align-items: center;
  gap: 34px;
}

/* toolbar */
.toolbar {
  position: relative;
  height: 35px;
  flex: none;
  display: flex;
  align-items: center;
  padding-left: 8px;
  background: #dfe0e5;
}
.tool {
  width: 37px;
  height: 35px;
  flex: none;
  box-sizing: border-box;
  padding-bottom: 2px;
  display: flex;
  align-items: center;
  justify-content: center;
}
.tool-text { font-size: 19px; color: #333; font-weight: 300; letter-spacing: -0.5px; font-family: "Noto Sans CJK SC", "Liberation Sans", sans-serif; }
.tool-right {
  margin-left: auto;
  display: flex;
  align-items: center;
  padding: 0 25px 5px 0;
  color: #333;
  white-space: nowrap;
}
.find { position: relative; margin-right: 43px; }
.new {
  position: absolute;
  left: 32px;
  top: -9px;
  padding: 0 2px;
  font-size: 10px;
  line-height: 11px;
  font-style: normal;
  color: #fff;
  background: #f44;
}
.block { margin-right: 15px; }
.acct { margin-right: 122px; }
.sys { margin-right: 15px; }
.upload {
  position: absolute;
  left: 1656px;
  top: 0;
  width: 131px;
  height: 32px;
  display: flex;
  border: 1px solid #3b9bf0;
  border-radius: 5px;
  overflow: hidden;
  background: #d5ecff;
  box-sizing: border-box;
}
.up-ico { width: 37px; background: #2f96f5; display: flex; align-items: center; justify-content: center; }
.up-ico circle { fill: none; stroke: #fff; stroke-width: 3; }
.up-txt { flex: 1; text-align: center; line-height: 30px; color: #6cb4f0; }

/* workspace */
.workspace { flex: 1; min-height: 0; display: flex; }
.left { width: 1616px; flex: none; display: flex; flex-direction: column; }
.symbol {
  position: relative;
  height: 24px;
  flex: none;
  box-sizing: border-box;
  padding-left: 45px;
  display: flex;
  align-items: center;
  font-size: 14px;
  color: #444;
}
.symbol::after {
  content: "";
  position: absolute;
  left: 40px;
  right: 0;
  bottom: 0;
  border-bottom: 2px solid #8a8a8a;
}
.sym-ico { margin-right: 5px; }
.symbol sup { color: #e00; font-size: 10px; line-height: 0; }
.dce { font-family: "Liberation Mono", monospace; font-size: 13px; margin-left: 3px; }
.period { margin-left: 19px; }
.body { flex: 1; min-height: 0; display: flex; }

.tabs {
  position: relative;
  width: 103px;
  flex: none;
}
.tab-lines { position: absolute; left: 0; top: 0; overflow: visible; }
.tab-lines path { fill: none; stroke: #6a6a6a; stroke-width: 1.2; }
.tab {
  position: relative;
  width: 44px;
  display: flex;
  flex-direction: column;
  align-items: center;
  font-size: 14px;
  line-height: 20px;
  color: #9a9a9a;
  box-sizing: border-box;
}
.tab.on { color: #000; }
.tab-0 { height: 107px; padding-top: 21px; }
.tab-1 { height: 101px; padding-top: 20px; }
.tab-2 { height: 99px; padding-top: 18px; }
.tab-3 { height: 99px; padding-top: 9px; }
.tab-4 { padding-top: 11px; }
.rot { writing-mode: vertical-rl; height: 28px; line-height: 14px; letter-spacing: 1px; margin-bottom: 6px; }

.charts { position: relative; flex: 1; display: flex; flex-direction: column; min-width: 0; }
.pane { box-sizing: border-box; border-left: 2px solid #8a8a8a; }
.pane-price { height: 508px; border-bottom: 2px solid #8a8a8a; }
.pane-vol { height: 185px; border-bottom: 2px solid #8a8a8a; }
.pane-macd { height: 152px; border-bottom: 2px solid #8a8a8a; }
.legend {
  position: relative;
  z-index: 2;
  display: flex;
  align-items: center;
  height: 20px;
  padding-left: 3px;
  font-size: 14.500px;
  white-space: nowrap;
}
.legend > span { margin-right: 12px; }
.legend > .first { margin-right: 17px; }
.b { color: #2f6bef; }
.k { color: #000; }
.m { color: #f0f; }
.g { color: #008000; }
.y { color: #808080; }
.kk { margin-left: 6px; }
.dates { height: 23px; position: relative; }
.dates span { position: absolute; top: 2px; color: #777; font-size: 14px; transform: translateX(-50%); }
.dates span:nth-child(1) { left: 137px; }
.dates span:nth-child(2) { left: 395px; }
.dates span:nth-child(3) { left: 629px; }
.dates span:nth-child(4) { left: 857px; }
.dates span:nth-child(5) { left: 1109px; }
.dates span:nth-child(6) { left: 1342px; }

.canvas { position: absolute; left: 0; top: 0; overflow: visible; pointer-events: none; }
.dash { stroke: #c4c4c8; stroke-dasharray: 4 3; fill: none; }
.tick { stroke: #0000b0; fill: none; }
.tickg { stroke: #8a8a8a; fill: none; }
.corner { fill: #8a8a8a; }
.ax { font-size: 14.500px; font-weight: bold; fill: #8e8e8e; text-anchor: end; }
.wick { fill: none; stroke-width: 1; }
.up .wick { stroke: #e8000c; }
.dn .wick { stroke: #057205; }
.doji .wick { stroke: #000; }
.up .bodyr { fill: #f5f5fb; stroke: #e8000c; stroke-width: 1.2; }
.dn .bodyr { fill: #057205; stroke: #057205; stroke-width: 0.6; }
.doji .bodyr { fill: #000; stroke: none; }
.l { fill: none; stroke-width: 1; }
.ma5 { stroke: #000; }
.ma10 { stroke: #2f6bef; }
.ma20 { stroke: #f0f; }
.ma40 { stroke: #008000; }
.ma60 { stroke: #808080; }
.hline { stroke: #f00; stroke-width: 3; fill: none; }
.diag { stroke-width: 4; }
.arrow { stroke: #f00; stroke-width: 3.500; fill: none; }
.lab { font-size: 14.500px; }
.lab.r { fill: #f00; }
.lab.gn { fill: #0a7a0a; }
.mid { text-anchor: middle; }
.end { text-anchor: end; }
.days { fill: #000c8c; font-size: 16px; }
.hist { fill: none; stroke-width: 1; }
.hist.red { stroke: #e8000c; }
.hist.green { stroke: #067606; }
.hist.gray { stroke: #9a9a9a; }

/* quote panel */
.panel {
  width: 304px;
  flex: none;
  box-sizing: border-box;
  border-left: 1px solid #8a8a8a;
  display: flex;
  flex-direction: column;
}
.panel > * { margin-right: 2px; }
.p-title {
  position: relative;
  height: 39px;
  flex: none;
  box-sizing: border-box;
  display: flex;
  align-items: center;
  padding-left: 27px;
  color: #2f5ea8;
  font-size: 26px;
  border-bottom: 1px solid #8a8a8a;
  border-right: 1px solid transparent;
}
.mk { position: absolute; left: 5px; top: 0; font-size: 15px; color: #f00; }
.p-code { margin-left: 22px; }
.p-book {
  height: 34px;
  flex: none;
  box-sizing: border-box;
  padding-top: 3px;
  display: flex;
  align-items: center;
  border-bottom: 1px solid #8a8a8a;
  border-right: 1px solid #8a8a8a;
}
.p-book .lb { width: 64px; padding-left: 2px; box-sizing: border-box; font-size: 16.500px; padding-top: 5px; }
.p-book .px { width: 125px; font-size: 24px; color: #000; }
.p-book .qt { font-size: 24px; color: #2f5ea8; }
.p-book .q2 { margin-left: 2px; }
.p-grid {
  height: 263px;
  flex: none;
  display: flex;
  box-sizing: border-box;
  border-bottom: 1px solid #8a8a8a;
  border-right: 1px solid #8a8a8a;
}
.q-col { box-sizing: border-box; }
.q-left { width: 134px; padding: 0 9px 0 2px; border-right: 1px dashed #777; }
.q-right { flex: 1; padding: 0 9px 0 9px; }
.q-row {
  height: 26px;
  display: flex;
  align-items: center;
  justify-content: space-between;
  font-size: 16px;
  white-space: nowrap;
}
.q-row b { font-size: 15.500px; }
.bl { color: #2f5ea8; }
.r { color: #f00; }
.gn { color: #008000; }
b.kk { color: #000; margin-left: 0; }
.tri {
  display: inline-block;
  margin-left: 1px;
  border-left: 5px solid transparent;
  border-right: 5px solid transparent;
  border-top: 6px solid #aaa;
  vertical-align: -2px;
}
.t-head, .t-row {
  display: grid;
  grid-template-columns: 80px 61px 50px 46px 44px;
  padding-left: 6px;
  text-align: right;
}
.t-head span:first-child, .t-row b:first-child { text-align: left; }
.t-head { font-size: 16px; height: 30px; line-height: 33px; box-sizing: border-box; }
.big-head { height: 34px; line-height: 34px; flex: none; }
.big-head { margin-bottom: 154px; }
.ticks {
  height: 310px;
  flex: none;
  box-sizing: border-box;
  overflow: hidden;
  border-top: 1px solid #8a8a8a;
  border-bottom: 1px solid #8a8a8a;
  border-right: 1px solid #8a8a8a;
}
.t-row { height: 28px; line-height: 28px; font-size: 16px; }
.t-row span { font-size: 16px; }
.tm { color: #333; }

/* sectors */
.sectors {
  height: 33px;
  flex: none;
  display: flex;
  align-items: center;
  padding-left: 36px;
  background: #dfe0e5;
  color: #444;
  white-space: nowrap;
}
.sec { padding: 0 7.600px; height: 33px; line-height: 33px; box-sizing: border-box; }
.sec.on { color: #2f5ea8; border-bottom: 2px solid #2f5ea8; padding: 0 7px; }
.plus { margin-left: 8px; font-size: 24px; font-weight: bold; color: #555; line-height: 33px; }
.forum { margin-left: auto; margin-right: 15px; display: flex; align-items: center; gap: 6px; color: #2f5ea8; }
.hs { fill: none; stroke: #2f5ea8; stroke-width: 2.500; }
.hsf { fill: none; stroke: #2f5ea8; stroke-width: 2; }

/* status */
.status {
  height: 35px;
  flex: none;
  display: flex;
  align-items: center;
  background: #fff;
  white-space: nowrap;
}
.web {
  width: 125px;
  padding-left: 6px;
  box-sizing: border-box;
  font-size: 19px;
  font-weight: bold;
  color: #1c5fb0;
  letter-spacing: -1px;
}
.web em { font-style: italic; font-size: 26px; line-height: 0; }
.idx { font-size: 15px; }
.num { font-family: "Liberation Mono", monospace; font-size: 15px; margin-left: 11px; }
.n2 { color: #333; width: 0; }
.idx2 { margin-left: 20px; }
.crb { margin-left: 41px; margin-bottom: 3px; color: #333; }
.num.n2 { margin-left: 11px; }
.edu { margin-left: 521px; color: #2f5ea8; width: 422px; }
.acc {
  width: 68px;
  height: 26px;
  margin-top: 3px;
  line-height: 26px;
  text-align: center;
  background: #bdd0e4;
  color: #333;
  border: 1px solid #d0d6de;
  box-sizing: border-box;
}
.acc1 { margin-right: 3px; }
.red-tick { width: 1px; height: 24px; background: #e00; margin: 3px 15px 0 13px; }
.meter {
  width: 22px;
  height: 26px;
  background: repeating-linear-gradient(0deg, #111 0 2px, #3a7a3a 2px 3px);
  border-bottom: 6px solid #0be00b;
  box-sizing: border-box;
}
.signal { margin-left: 8px; margin-right: 9px; }
.signal path { fill: #3cc23c; }
.clock { font-size: 15px; color: #000; letter-spacing: -0.2px; }

/* taskbar */
.taskbar {
  position: relative;
  height: 50px;
  flex: none;
  display: flex;
  background: linear-gradient(90deg, #02141f, #001320 60%, #00101c);
  color: #fff;
}
.tb-left { display: flex; padding-left: 1px; }
.tb {
  position: relative;
  width: 61.500px;
  height: 50px;
  box-sizing: border-box;
  display: flex;
  align-items: center;
  justify-content: center;
}
.tb-ln { fill: none; stroke: #fff; stroke-width: 1.300; }
.run::after {
  content: "";
  position: absolute;
  left: 6px;
  right: 6px;
  bottom: 0;
  height: 3px;
  background: #6db4ea;
}
.tile-or { background: #96592a; border-bottom: 3px solid #f57a0a; }
.tile-bl { background: #364851; border-bottom: 3px solid #6db4ea; }
.wh6 {
  width: 30px;
  height: 34px;
  background: linear-gradient(90deg, #a81c1c 55%, #1f4aa0 55%);
  font-size: 15px;
  font-weight: bold;
  display: flex;
  align-items: center;
}
.wh6 .six { font-style: italic; font-size: 20px; }
.tray {
  margin-left: auto;
  display: flex;
  align-items: center;
  gap: 12px;
  padding-right: 29px;
}
.vol-ico { margin-left: -6px; }
.ime { font-size: 18px; margin-left: -2px; }
.tb-time {
  width: 92px;
  margin-left: -7px;
  display: flex;
  flex-direction: column;
  align-items: center;
  line-height: 23px;
  font-size: 15px;
}
.note { margin-left: 5px; }
.desk { margin-left: 16px; }
.mark {
  position: absolute;
  right: 14px;
  bottom: 6px;
  font-size: 14.500px;
  color: rgba(200, 200, 200, 0.55);
}

/* popup */
.popup {
  position: absolute;
  left: 1537px;
  top: 888px;
  width: 345px;
  height: 68px;
  background: #f0f0f0;
  border: 1px solid #bbb;
  box-sizing: border-box;
  box-shadow: 2px 3px 6px rgba(0, 0, 0, 0.3);
}
.pop-title {
  height: 30px;
  background: #fff;
  display: flex;
  align-items: center;
  justify-content: space-between;
  padding: 0 15px 3px 3px;
  box-sizing: border-box;
  color: #aaa;
  font-size: 15px;
}
.pop-title path { stroke: #999; fill: none; }
.pop-body { display: flex; align-items: center; height: 36px; padding-left: 18px; }
.lots { font-size: 14px; color: #222; width: 34px; }
.lot-box {
  width: 79px;
  height: 24px;
  box-sizing: border-box;
  background: #fff;
  border: 1px solid #aaa;
  display: flex;
  align-items: center;
  justify-content: flex-end;
}
.lot-box b { font-size: 17px; color: #000; margin-right: 4px; }
.spin {
  width: 21px;
  height: 22px;
  box-sizing: border-box;
  border: 1px solid #999;
  display: flex;
  flex-direction: column;
  align-items: center;
  justify-content: space-around;
}
.sp-up { border: 4px solid transparent; border-bottom: 5px solid #222; border-top: 0; }
.sp-dn { border: 4px solid transparent; border-top: 5px solid #222; border-bottom: 0; }
.op {
  position: relative;
  width: 24px;
  height: 24px;
  margin-left: 15px;
  border: 2px solid #222;
  box-sizing: border-box;
  display: flex;
  align-items: center;
  justify-content: center;
  font-size: 14px;
  color: #222;
  line-height: 1;
}
.lot-box + .op { margin-left: 13px; }
.op::after {
  content: "";
  position: absolute;
  left: -3px;
  right: -3px;
  top: 10px;
  border-top: 1px dashed #222;
}
.eraser { margin-left: 15px; }
.eraser path { fill: none; stroke: #222; stroke-width: 1.300; }
</style>
